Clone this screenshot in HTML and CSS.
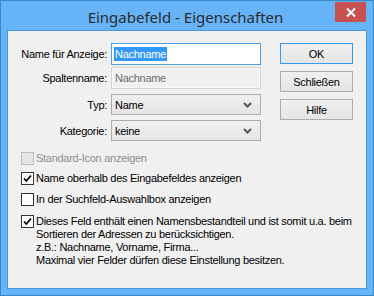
FILE: index.html
```html
<!DOCTYPE html>
<html lang="de">
<head>
<meta charset="utf-8">
<link rel="stylesheet" href="styles.css">
</head>
<body>
<div class="window">
  <div class="titlebar">
    <span class="title">Eingabefeld - Eigenschaften</span>
    <div class="close">
      <svg width="10" height="9" viewBox="0 0 10 9"><path d="M1 0.5 L9 8.5 M9 0.5 L1 8.5" stroke="#fff" stroke-width="2" fill="none"/></svg>
    </div>
  </div>
  <div class="client">
    <div class="top">
      <div class="form">
        <div class="row r1">
          <label class="lbl">Name für Anzeige:</label>
          <div class="field focus"><span class="sel">Nachname</span></div>
        </div>
        <div class="row r2">
          <label class="lbl">Spaltenname:</label>
          <div class="field disabled">Nachname</div>
        </div>
        <div class="row r3">
          <label class="lbl">Typ:</label>
          <div class="combo"><span>Name</span><svg class="chev" width="9" height="6" viewBox="0 0 9 6"><path d="M1 1 L4.5 4.5 L8 1" stroke="#555" stroke-width="2" fill="none"/></svg></div>
        </div>
        <div class="row r4">
          <label class="lbl">Kategorie:</label>
          <div class="combo"><span>keine</span><svg class="chev" width="9" height="6" viewBox="0 0 9 6"><path d="M1 1 L4.5 4.5 L8 1" stroke="#555" stroke-width="2" fill="none"/></svg></div>
        </div>
      </div>
      <div class="buttons">
        <div class="btn default">OK</div>
        <div class="btn">Schließen</div>
        <div class="btn">Hilfe</div>
      </div>
    </div>
    <div class="checks">
      <div class="chk disabled"><span class="box"></span><span class="txt">Standard-Icon anzeigen</span></div>
      <div class="chk c2"><span class="box"><svg width="11" height="11" viewBox="0 0 11 11"><path d="M2 5.5 L4.3 8 L9 2.5" stroke="#000" stroke-width="1.8" fill="none"/></svg></span><span class="txt">Name oberhalb des Eingabefeldes anzeigen</span></div>
      <div class="chk c3"><span class="box"></span><span class="txt">In der Suchfeld-Auswahlbox anzeigen</span></div>
      <div class="chk c4"><span class="box"><svg width="11" height="11" viewBox="0 0 11 11"><path d="M2 5.5 L4.3 8 L9 2.5" stroke="#000" stroke-width="1.8" fill="none"/></svg></span><span class="txt">Dieses Feld enthält einen Namensbestandteil und ist somit u.a. beim<br>Sortieren der Adressen zu berücksichtigen.<br>z.B.: Nachname, Vorname, Firma...<br>Maximal vier Felder dürfen diese Einstellung besitzen.</span></div>
    </div>
  </div>
</div>
</body>
</html>
```
FILE: styles.css
```css
html, body {
  margin: 0;
  padding: 0;
}
body {
  width: 374px;
  height: 296px;
  overflow: hidden;
  font-family: "Liberation Sans", Arial, sans-serif;
  font-size: 11px;
  letter-spacing: -0.28px;
  color: #000;
}
.window {
  box-sizing: border-box;
  width: 374px;
  height: 296px;
  border: 1px solid #3a86c6;
  background: #66b3f8;
  display: flex;
  flex-direction: column;
  position: relative;
}
.titlebar {
  height: 29px;
  display: flex;
  justify-content: center;
  align-items: center;
}
.title {
  font-family: "Noto Sans", "Open Sans", sans-serif;
  font-size: 15px;
  letter-spacing: 0;
  color: #2b2b2b;
  margin-top: 2px;
  margin-right: 3px;
}
.close {
  position: absolute;
  top: 1px;
  right: 7px;
  width: 31px;
  height: 20px;
  background: #c75050;
  display: flex;
  align-items: center;
  justify-content: center;
}
.client {
  margin: 0 6px 6px 6px;
  flex: 1;
  border: 1px solid #4a97da;
  background: #f0f0f0;
  position: relative;
}
.top {
  display: flex;
  padding-top: 12px;
}
.form {
  width: 253px;
}
.row {
  display: flex;
  align-items: center;
}
.lbl {
  text-align: right;
  padding-right: 4px;
  box-sizing: border-box;
  width: 103px;
}
.r2 { margin-top: 2px; }
.r3 { margin-top: 5px; }
.r4 { margin-top: 5px; }
.field {
  box-sizing: border-box;
  width: 150px;
  height: 22px;
  border: 1px solid #569de5;
  background: #fff;
  padding: 2px 2px;
  display: flex;
  align-items: center;
}
.field.disabled {
  border: 1px solid #d4d4d4;
  box-shadow: inset 0 0 0 1px #fafafa;
  background: #f0f0f0;
  color: #6d6d6d;
  padding-left: 3px;
}
.sel {
  background: #3399ff;
  color: #fff;
  padding: 1px 1px;
}
.combo {
  box-sizing: border-box;
  width: 150px;
  height: 21px;
  border: 1px solid #acacac;
  background: linear-gradient(#f0f0f0, #e5e5e5);
  display: flex;
  align-items: center;
  justify-content: space-between;
  padding: 0 8px 0 3px;
}
.buttons {
  display: flex;
  flex-direction: column;
  gap: 7px;
  margin-left: 19px;
}
.btn {
  box-sizing: border-box;
  width: 73px;
  height: 21px;
  border: 1px solid #acacac;
  background: linear-gradient(#f0f0f0, #e5e5e5);
  display: flex;
  align-items: center;
  justify-content: center;
}
.btn.default {
  border-color: #3399ff;
}
.checks {
  padding-left: 13px;
  margin-top: 11px;
  display: flex;
  flex-direction: column;
}
.chk {
  display: flex;
  align-items: flex-start;
  line-height: 13px;
  white-space: nowrap;
}
.c2 { margin-top: 7px; }
.c3 { margin-top: 8px; }
.c4 { margin-top: 9px; }
.box {
  box-sizing: border-box;
  width: 13px;
  height: 13px;
  border: 1px solid #333;
  background: #fff;
  margin-right: 2px;
  display: flex;
  align-items: center;
  justify-content: center;
  flex: none;
}
.chk.disabled .box {
  border-color: #bcbcbc;
  background: #e6e6e6;
}
.chk.disabled .txt {
  color: #8d8d8d;
}
```
